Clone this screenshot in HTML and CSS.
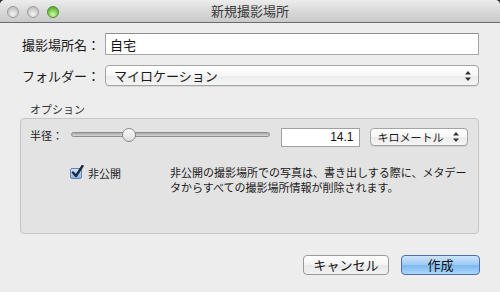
FILE: index.html
```html
<!DOCTYPE html>
<html lang="ja">
<head>
  <meta charset="UTF-8">
  <title>新規撮影場所</title>
  <link rel="stylesheet" href="styles.css">
</head>
<body>
  <div class="window">
    <div class="titlebar">
      <div class="lights">
        <span class="light"></span>
        <span class="light"></span>
        <span class="light green"></span>
      </div>
      <div class="title">新規撮影場所</div>
      <div></div>
    </div>

    <div class="content">
      <div class="form-row">
        <label class="field-label" for="name">撮影場所名：</label>
        <input class="text-field" id="name" type="text" value="自宅">
      </div>
      <div class="form-row">
        <span class="field-label">フォルダー：</span>
        <div class="popup wide">
          <span>マイロケーション</span>
          <svg class="arrows" width="6" height="10" viewBox="0 0 6 10">
            <path d="M3 0 L6 3.5 L0 3.5 Z M0 6.5 L6 6.5 L3 10 Z" fill="#333"/>
          </svg>
        </div>
      </div>

      <div class="group-title">オプション</div>
      <div class="group">
        <div class="radius-row">
          <span class="small-label">半径：</span>
          <div class="slider">
            <div class="track"></div>
            <div class="thumb"></div>
          </div>
          <input class="number-field" type="text" value="14.1">
          <div class="popup unit">
            <span>キロメートル</span>
            <svg class="arrows" width="6" height="10" viewBox="0 0 6 10">
              <path d="M3 0 L6 3.5 L0 3.5 Z M0 6.5 L6 6.5 L3 10 Z" fill="#333"/>
            </svg>
          </div>
        </div>
        <div class="private-row">
          <div class="check">
            <span class="box">
              <svg width="14" height="14" viewBox="0 0 14 14">
                <path d="M3 7.5 L6 11 L12.5 1" fill="none" stroke="#1c2a44" stroke-width="2.4" stroke-linecap="round" stroke-linejoin="round"/>
              </svg>
            </span>
            <span>非公開</span>
          </div>
          <p class="note">非公開の撮影場所での写真は、書き出しする際に、メタデー<br>タからすべての撮影場所情報が削除されます。</p>
        </div>
      </div>

      <div class="buttons">
        <button class="btn">キャンセル</button>
        <button class="btn primary">作成</button>
      </div>
    </div>
  </div>
</body>
</html>
```

FILE: styles.css
```css
* {
  box-sizing: border-box;
  margin: 0;
  padding: 0;
}

html {
  background: #2f3a2c;
}

body {
  width: 500px;
  height: 292px;
  overflow: hidden;
  font-family: "Noto Sans CJK JP", "Liberation Sans", sans-serif;
  color: #1a1a1a;
}

.window {
  height: 292px;
  background: #ededed;
  border-radius: 5px 5px 0 0;
  overflow: hidden;
}

.titlebar {
  height: 23px;
  display: grid;
  grid-template-columns: 1fr auto 1fr;
  align-items: center;
  background: linear-gradient(#ececec, #d6d6d6 60%, #c9c9c9);
  border-bottom: 1px solid #6b6b6b;
}

.lights {
  display: flex;
  gap: 8px;
  padding-left: 7px;
  padding-top: 2px;
}

.light {
  width: 12px;
  height: 12px;
  border-radius: 50%;
  border: 1px solid #9d9d9d;
  background: radial-gradient(circle at 50% 70%, #f4f4f4, #cfcfcf 55%, #b5b5b5);
}

.light.green {
  border-color: #4f8a3a;
  background: radial-gradient(circle at 50% 75%, #d6f7b3, #7fcf4f 50%, #3f9a25);
}

.title {
  font-size: 13px;
  color: #3a3a3a;
  line-height: 22px;
}

.content {
  padding: 10px 21px 0 20px;
}

.form-row {
  display: flex;
  align-items: center;
  margin-bottom: 10px;
}

.field-label {
  width: 85px;
  padding-left: 2px;
  font-size: 13px;
}

.text-field {
  flex: 1;
  height: 22px;
  border: 1px solid #a5a5a5;
  border-top-color: #8e8e8e;
  background: #fff;
  font: 13px "Noto Sans CJK JP", sans-serif;
  padding: 0 4px;
  color: #111;
}

.popup {
  display: flex;
  align-items: center;
  justify-content: space-between;
  border: 1px solid #a4a4a4;
  border-radius: 4px;
  background: linear-gradient(#ffffff, #f7f7f7 50%, #ececec 51%, #f4f4f4);
  box-shadow: 0 1px 0 rgba(0, 0, 0, 0.08);
}

.popup.wide {
  flex: 1;
  height: 21px;
  padding: 0 7px 0 8px;
  font-size: 13px;
}

.arrows {
  display: block;
  flex: none;
}

.group-title {
  font-size: 11px;
  color: #333;
  padding-left: 10px;
  margin-top: 16px;
  line-height: 15px;
}

.group {
  height: 116px;
  margin-top: 1px;
  border: 1px solid #c6c6c6;
  border-radius: 4px;
  background: #e3e3e3;
  padding: 8px 10px 0 9px;
}

.radius-row {
  display: flex;
  align-items: center;
  font-size: 11px;
}

.small-label {
  width: 41px;
  margin-bottom: 4px;
}

.slider {
  position: relative;
  width: 200px;
  height: 19px;
}

.track {
  margin-top: 4px;
  height: 5px;
  border: 1px solid #8f8f8f;
  border-radius: 3px;
  background: linear-gradient(#a8a8a8, #d8d8d8);
}

.thumb {
  position: absolute;
  left: 51px;
  top: 0;
  width: 14px;
  height: 14px;
  border-radius: 50%;
  border: 1px solid #8a8a8a;
  background: linear-gradient(#fdfdfd, #dcdcdc);
}

.number-field {
  width: 79px;
  height: 19px;
  margin-left: 11px;
  border: 1px solid #a0a0a0;
  background: #fff;
  text-align: right;
  font: 12px "Liberation Sans", sans-serif;
  padding: 0 5px;
  color: #111;
}

.popup.unit {
  width: 99px;
  height: 18px;
  margin-left: 10px;
  padding: 0 8px 0 7px;
  font-size: 11px;
}

.private-row {
  display: flex;
  margin-top: 18px;
  font-size: 11px;
}

.check {
  display: flex;
  align-items: center;
  gap: 6px;
  flex: none;
  width: 140px;
  padding-left: 40px;
  height: 16px;
}

.box {
  position: relative;
  width: 12px;
  height: 11px;
  border: 1px solid #6b83a8;
  border-radius: 2px;
  background: linear-gradient(#cfe3f9, #86b6ea);
}

.box svg {
  position: absolute;
  left: -1px;
  top: -4px;
}

.note {
  line-height: 15px;
  white-space: nowrap;
  color: #1a1a1a;
}

.buttons {
  display: flex;
  justify-content: flex-end;
  gap: 12px;
  margin-top: 21px;
  margin-right: -1px;
}

.btn {
  height: 20px;
  width: 86px;
  border: 1px solid #9a9a9a;
  border-radius: 4px;
  background: linear-gradient(#ffffff, #f3f3f3 50%, #e8e8e8 51%, #f2f2f2);
  font: 13px "Noto Sans CJK JP", sans-serif;
  color: #111;
  line-height: 18px;
}

.btn.primary {
  width: 79px;
  border-color: #4f6fa6;
  background: linear-gradient(#cde4fb, #9ccaf3 50%, #7db8f0 51%, #a9d6fb);
}
```
